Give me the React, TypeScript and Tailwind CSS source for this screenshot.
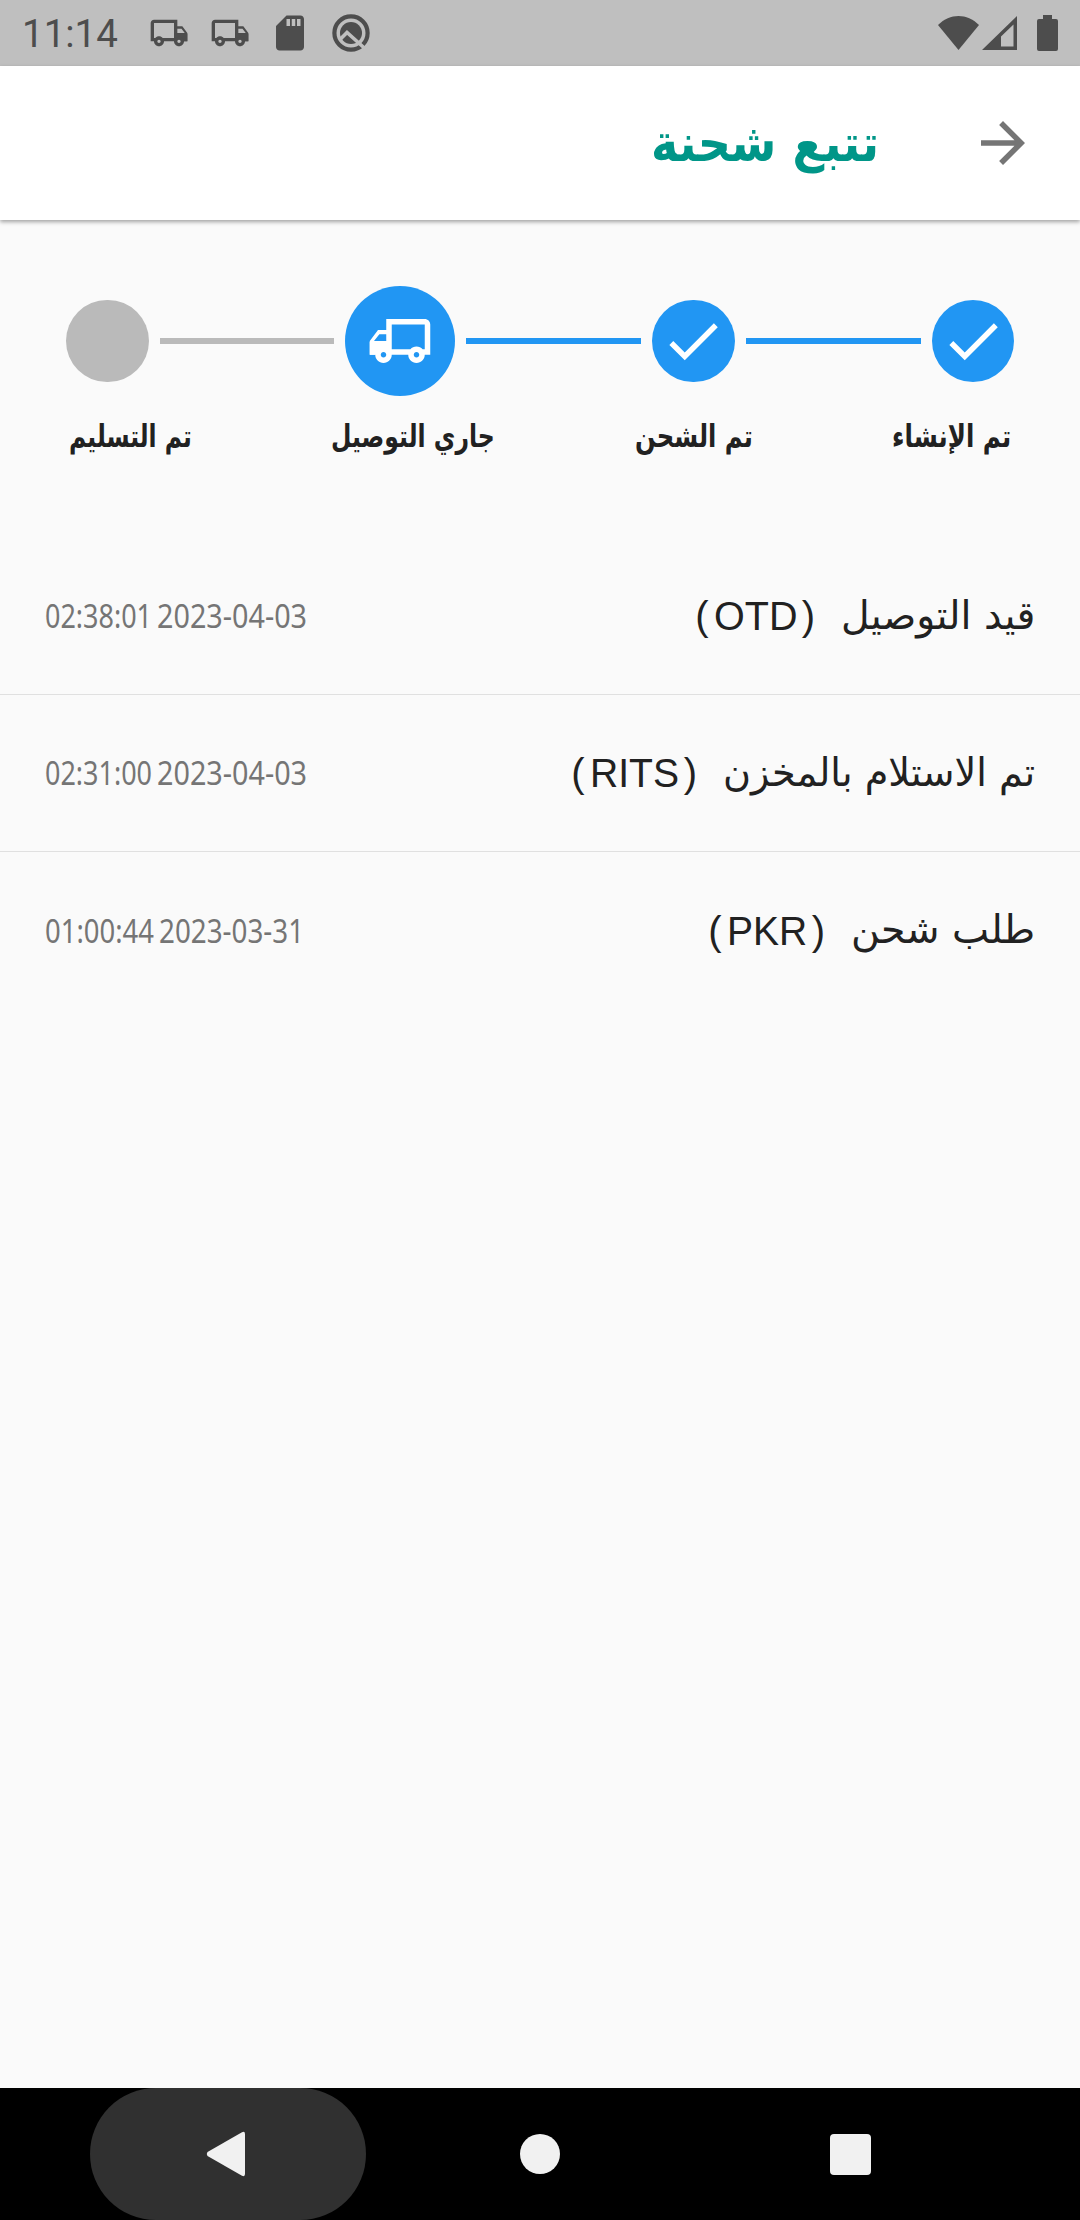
import React, { useLayoutEffect, useRef, useState } from 'react';

interface FitProps {
  width: number;
  children: React.ReactNode;
  dir?: 'rtl' | 'ltr';
  className?: string;
}

// Squeezes a single line of text horizontally so it fills `width`
const Fit: React.FC<FitProps> = ({ width, children, dir = 'rtl', className = '' }) => {
  const ref = useRef<HTMLSpanElement>(null);
  const [scale, setScale] = useState(1);

  useLayoutEffect(() => {
    if (ref.current) setScale(width / ref.current.offsetWidth);
  }, [width]);

  return (
    <span dir="ltr" className="block shrink-0" style={{ width }}>
      <span
        ref={ref}
        dir={dir}
        className={`inline-block origin-left whitespace-nowrap ${className}`}
        style={{ transform: `scaleX(${scale})` }}
      >
        {children}
      </span>
    </span>
  );
};

interface Step {
  label: string;
  labelWidth: number;
  state: 'done' | 'active' | 'pending';
}

const steps: Step[] = [
  { label: 'تم الإنشاء', labelWidth: 119, state: 'done' },
  { label: 'تم الشحن', labelWidth: 118, state: 'done' },
  { label: 'جاري التوصيل', labelWidth: 164, state: 'active' },
  { label: 'تم التسليم', labelWidth: 123, state: 'pending' },
];

interface TrackingEvent {
  title: string;
  titleWidth: number;
  code: string;
  codeWidth: number;
  date: string;
  dateWidth: number;
  time: string;
  timeWidth: number;
}

const events: TrackingEvent[] = [
  {
    title: 'قيد التوصيل',
    titleWidth: 194,
    code: 'OTD',
    codeWidth: 83,
    date: '2023-04-03',
    dateWidth: 150,
    time: '02:38:01',
    timeWidth: 107,
  },
  {
    title: 'تم الاستلام بالمخزن',
    titleWidth: 312,
    code: 'RITS',
    codeWidth: 89,
    date: '2023-04-03',
    dateWidth: 150,
    time: '02:31:00',
    timeWidth: 107,
  },
  {
    title: 'طلب شحن',
    titleWidth: 184,
    code: 'PKR',
    codeWidth: 80,
    date: '2023-03-31',
    dateWidth: 145,
    time: '01:00:44',
    timeWidth: 109,
  },
];

const TruckIcon: React.FC<{ className?: string }> = ({ className }) => (
  <svg className={className} viewBox="0 0 24 24" fill="currentColor">
    <path
      fillRule="evenodd"
      d="M3 4c-1.1 0-2 .9-2 2v11h2c0 1.66 1.34 3 3 3s3-1.34 3-3h6c0 1.66 1.34 3 3 3s3-1.34 3-3h2v-5l-3-4h-3V4H3zm0 2h12v9H8.22c-.55-.61-1.33-1-2.22-1s-1.67.39-2.22 1H3V6zm14 3.5h2.5l1.96 2.5H17V9.5zM6 16c.55 0 1 .45 1 1s-.45 1-1 1-1-.45-1-1 .45-1 1-1zm12 0c.55 0 1 .45 1 1s-.45 1-1 1-1-.45-1-1 .45-1 1-1z"
    />
    <path d="M15.300 12.400H23V17H21a3 3 0 0 0-5.700-1zM18 14a3 3 0 0 0-2.700 2v-3z" />
  </svg>
);

const StatusBar: React.FC = () => (
  <div className="flex h-[66px] items-center bg-[#bfbfbf] text-[#4d4d4d]">
    <span className="ml-[22px] w-[97px] pt-[2px] font-[Roboto,sans-serif] text-[38.5px] leading-[64px]">11:14</span>
    <TruckIcon className="ml-[30px] h-10 w-10" />
    <TruckIcon className="ml-[21px] h-10 w-10" />
    <svg className="ml-[19px] h-[42px] w-[42px]" viewBox="0 0 24 24" fill="currentColor">
      <path d="M18 2h-8L4.02 8 4 20c0 1.1.9 2 2 2h12c1.1 0 2-.9 2-2V4c0-1.1-.9-2-2-2zm-6 6h-2V4h2v4zm3 0h-2V4h2v4zm3 0h-2V4h2v4z" />
    </svg>
    <svg className="ml-[21px] h-[38px] w-[38px]" viewBox="0 0 38 38" fill="none">
      <circle cx="19" cy="19" r="16.600" stroke="currentColor" strokeWidth="4.200" />
      <circle cx="19" cy="19" r="11" fill="currentColor" />
      <path d="M8 25.500L15 18.500L34 35.500" stroke="#bfbfbf" strokeWidth="3.600" />
    </svg>
    <svg className="ml-auto h-[34px] w-[41px]" viewBox="0 0 41 34" fill="currentColor">
      <path d="M0 9C12-3 29-3 41 9L20.500 34z" />
    </svg>
    <svg className="ml-[3px] h-[34px] w-[35px]" viewBox="0 0 35 34" fill="currentColor">
      <path fillRule="evenodd" d="M35 0v34H0zM31.500 8.500L19 20.500V30.500h12.500z" />
    </svg>
    <svg className="mr-[22px] ml-[20px] h-9 w-[21px]" viewBox="0 0 21 36" fill="currentColor">
      <path d="M6 0h9v4h4a2 2 0 0 1 2 2v28a2 2 0 0 1-2 2H2a2 2 0 0 1-2-2V6a2 2 0 0 1 2-2h4z" />
    </svg>
  </div>
);

const AppBar: React.FC = () => (
  <header dir="rtl" className="relative flex h-[154px] items-center bg-white pr-11 shadow-[0_2px_4px_rgba(0,0,0,0.35)]">
    <svg className="h-[66px] w-[66px] text-[#757575]" viewBox="0 0 24 24" fill="currentColor">
      <path d="M12 4l-1.410 1.410L16.170 11H4v2h12.170l-5.580 5.590L12 20l8-8z" />
    </svg>
    <h1 className="mr-[91px] font-['DejaVu_Sans',sans-serif] text-[52px] font-bold text-[#009688]">
      <Fit width={228}>تتبع شحنة</Fit>
    </h1>
  </header>
);

const StepCircle: React.FC<{ state: Step['state'] }> = ({ state }) => {
  if (state === 'active') {
    return (
      <div className="flex h-[110px] w-[110px] shrink-0 items-center justify-center rounded-full bg-[#2196f3] text-white">
        <TruckIcon className="h-[66px] w-[66px] -scale-x-100" />
      </div>
    );
  }
  if (state === 'pending') {
    return <div className="h-[82.500px] w-[82.500px] shrink-0 rounded-full bg-[#bababa]" />;
  }
  return (
    <div className="flex h-[82.500px] w-[82.500px] shrink-0 items-center justify-center rounded-full bg-[#2196f3] text-white">
      <svg className="h-[66px] w-[66px]" viewBox="0 0 24 24" fill="currentColor">
        <path d="M9 16.170L4.830 12l-1.420 1.410L9 19 21 7l-1.410-1.410z" />
      </svg>
    </div>
  );
};

const Stepper: React.FC = () => (
  <section dir="rtl" className="px-[66px] pt-[66px]">
    <div className="flex items-center gap-[11px]">
      {steps.map((step, i) => (
        <React.Fragment key={step.label}>
          {i > 0 && (
            <div className={`h-[5.500px] flex-1 ${step.state === 'pending' ? 'bg-[#bababa]' : 'bg-[#2196f3]'}`} />
          )}
          <StepCircle state={step.state} />
        </React.Fragment>
      ))}
    </div>
    <div className="mt-[20px] flex h-[122px] justify-between px-[3px] font-['DejaVu_Sans',sans-serif] text-[31px] leading-[40px] font-bold text-[#212121]">
      {steps.map((step) => (
        <Fit key={step.label} width={step.labelWidth}>
          {step.label}
        </Fit>
      ))}
    </div>
  </section>
);

const EventRow: React.FC<{ event: TrackingEvent }> = ({ event }) => (
  <li dir="rtl" className="flex h-[157px] items-center justify-between border-b border-[#e0e0e0] pr-[45px] pl-[45px] last:border-b-0">
    <div className="flex items-center text-[#212121]">
      <Fit width={event.titleWidth} className="font-['DejaVu_Sans',sans-serif] text-[39px]">
        {event.title}
      </Fit>
      <div dir="ltr" className="mr-[26px] flex items-center gap-[5px] font-['Liberation_Sans',sans-serif] text-[40px]">
        <span>(</span>
        <Fit width={event.codeWidth} dir="ltr">
          {event.code}
        </Fit>
        <span>)</span>
      </div>
    </div>
    <div dir="ltr" className="flex gap-[5px] font-['Noto_Sans',sans-serif] text-[32px] text-[#757575]">
      <Fit width={event.timeWidth} dir="ltr">
        {event.time}
      </Fit>
      <Fit width={event.dateWidth} dir="ltr">
        {event.date}
      </Fit>
    </div>
  </li>
);

const NavigationBar: React.FC = () => (
  <nav className="flex h-[132px] items-center bg-black text-[#f1f1f1]">
    <div className="ml-[90px] flex h-full w-[276px] items-center rounded-full bg-[#303030] pl-[116px]">
      <svg className="h-[46px] w-[40px]" viewBox="0 0 40 46" fill="currentColor">
        <path d="M1.500 21L36 1.200Q39 0 39 3V43Q39 46 36 44.800L1.500 25Q0 23 1.500 21z" />
      </svg>
    </div>
    <div className="ml-[154px] h-10 w-10 rounded-full bg-[#f1f1f1]" />
    <div className="ml-[270px] h-[41px] w-[41px] rounded-[4px] bg-[#f1f1f1]" />
  </nav>
);

export default function App() {
  return (
    <div className="flex h-[2220px] w-[1080px] flex-col overflow-hidden bg-[#fafafa]">
      <StatusBar />
      <AppBar />
      <main className="flex-1">
        <Stepper />
        <ul>
          {events.map((event) => (
            <EventRow key={event.code} event={event} />
          ))}
        </ul>
      </main>
      <NavigationBar />
    </div>
  );
}
